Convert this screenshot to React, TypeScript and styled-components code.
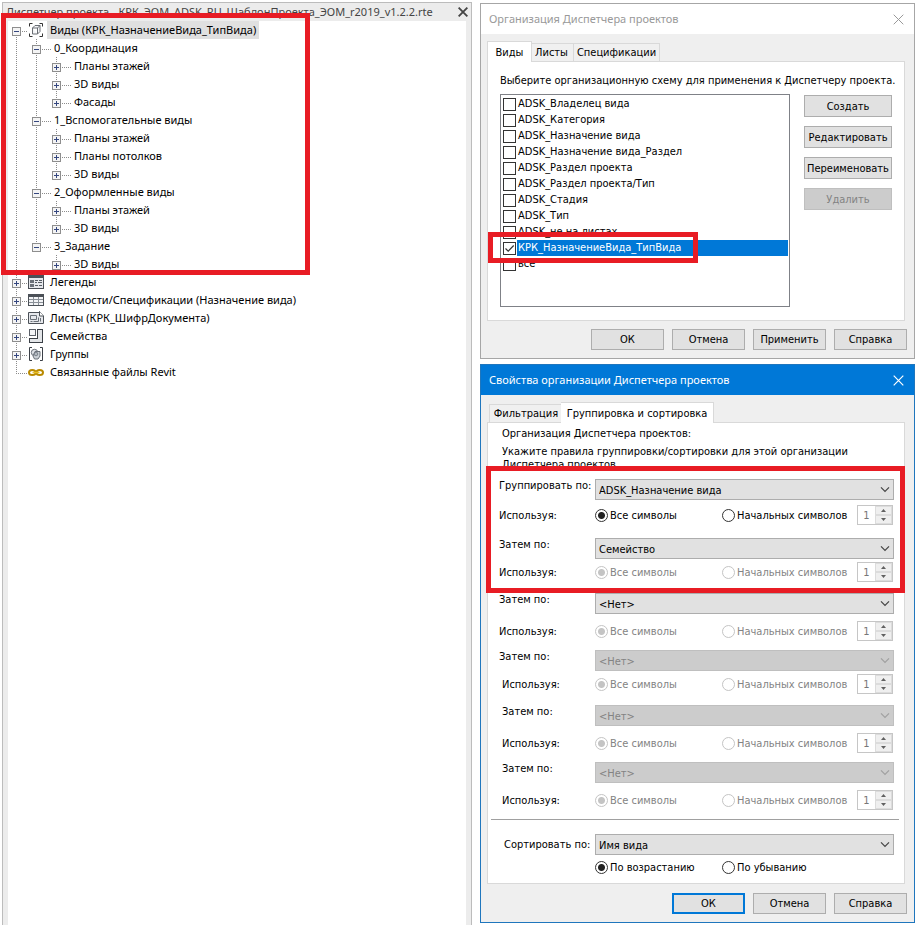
import React, { useState } from 'react';
import styled, { createGlobalStyle, css } from 'styled-components';

const treeFont = '"Noto Sans", "Open Sans", sans-serif';
const dialogFont = '"DejaVu Sans Condensed", "DejaVu Sans", sans-serif';
const RED = '#e81c24';
const BLUE = '#0078d7';

const GlobalStyle = createGlobalStyle`
  *, *::before, *::after { box-sizing: border-box; }
  body { margin: 0; background: #fff; color: #000; }
  button, input, select { font: inherit; color: inherit; margin: 0; padding: 0; border-radius: 0; }
  ul { list-style: none; margin: 0; padding: 0; }
  p, h2 { margin: 0; font-weight: 400; }
`;

const Page = styled.div`
  display: grid;
  grid-template-columns: minmax(0, 470fr) minmax(0, 435fr);
  column-gap: 8px;
  min-height: 100vh;
  padding: 0 4px 0 2px;
`;

/* ---------- shared ---------- */

const Highlight = styled.div`
  position: absolute;
  border: 5px solid ${RED};
  pointer-events: none;
  z-index: 2;
`;

const IconButton = styled.button`
  display: flex;
  align-items: center;
  justify-content: center;
  border: 0;
  background: none;
`;

const CloseIcon = ({ size, width }: { size: number; width: number }) => (
  <svg width={size} height={size} viewBox="0 0 11 11" aria-hidden="true">
    <path d="M.7.7l9.6 9.6M10.3.7L.7 10.3" stroke="currentColor" strokeWidth={width} fill="none" />
  </svg>
);

/* ---------- project browser ---------- */

const Browser = styled.section`
  position: relative;
  display: flex;
  flex-direction: column;
  margin-top: 2px;
  border: 1px solid #bcbcbc;
  border-bottom: 0;
  background: #ececec;
  font: 11px/18px ${treeFont};
`;

const BrowserTitle = styled.header`
  display: flex;
  justify-content: space-between;
  align-items: center;
  height: 18px;
  padding: 0 3px;
  color: #444;
  white-space: nowrap;
`;

const Tree = styled.ul`
  flex: 1;
  margin: 0 5px;
  background: #fff;
`;

const TreeRow = styled.li`
  display: flex;
  height: 18px;
`;

const dotsX = 'repeating-linear-gradient(90deg, #8c8c8c 0 1px, transparent 1px 2px)';
const dotsY = 'repeating-linear-gradient(180deg, #8c8c8c 0 1px, transparent 1px 2px)';

type Line = 'none' | 'full' | 'top' | 'bottom';

const Guide = styled.span<{ $line: Line; $branch?: boolean }>`
  display: flex;
  align-items: center;
  flex: none;
  width: 20px;
  padding-left: 4px;
  background-repeat: no-repeat;
  background-image: ${p => (p.$branch ? dotsX : 'none')}, ${p => (p.$line === 'none' ? 'none' : dotsY)};
  background-size: 12px 1px, 1px ${p => (p.$line === 'full' ? '18px' : '10px')};
  background-position: 8px 10px, 8px ${p => (p.$line === 'bottom' ? '10px' : '0')};
`;

const Stub = styled.span`
  flex: none;
  width: 3px;
  background: ${dotsX} 0 10px / 3px 1px no-repeat;
`;

const Toggle = styled(IconButton)`
  width: 9px;
  height: 9px;
  margin-top: 2px;
`;

const TreeIcon = styled.span`
  display: flex;
  align-items: center;
  flex: none;
  width: 19px;
`;

const TreeLabel = styled.span<{ $selected?: boolean }>`
  padding: 0 3px;
  white-space: nowrap;
  background: ${p => (p.$selected ? '#e0e0e0' : 'transparent')};
`;

const BrowserHighlight = styled(Highlight)`
  left: -2px;
  top: 10px;
  width: 309px;
  height: 262px;
`;

const ToggleIcon = ({ open }: { open: boolean }) => (
  <svg width="9" height="9" viewBox="0 0 9 9" shapeRendering="crispEdges" aria-hidden="true">
    <rect x=".5" y=".5" width="8" height="8" fill="#f4f4f4" stroke="#8e8e8e" />
    <path d={open ? 'M2 4.500h5' : 'M2 4.500h5M4.500 2v5'} stroke="#35477f" />
  </svg>
);

const iconArt: Record<string, React.ReactNode> = {
  views: (
    <g fill="none" stroke="#333">
      <path d="M4.500 1.500h-3v3M11.500 1.500h3v3M1.500 11.500v3h3M14.500 11.500v3h-3" />
      <path d="M7 3.500L4.500 6v6h5L12 9.500v-6zM4.500 6h5v6M9.500 6L12 3.500" stroke="#6a6e74" fill="#f4f5f7" />
    </g>
  ),
  legends: (
    <g shapeRendering="crispEdges">
      <path d="M.5 1.500h15v13H.5z" fill="#e6e8ec" stroke="#4b5057" />
      <path d="M0 1h16v3H0z" fill="#4b5057" />
      <path d="M2 6h4v3H2zM2 10h4v3H2z" fill="#6a7078" />
      <path d="M7 6.500h3M11 6.500h3M7 8.500h2M10 8.500h4M7 11.500h3M11 11.500h3" stroke="#555b63" />
    </g>
  ),
  schedules: (
    <g shapeRendering="crispEdges">
      <path d="M.5 2.500h15v11H.5z" fill="#f3f4f6" stroke="#4b5057" />
      <path d="M0 2h16v3H0z" fill="#4b5057" />
      <path d="M1 7.500h14M1 10.500h14M5.500 5v8M10.500 5v8" stroke="#8a9098" />
    </g>
  ),
  sheets: (
    <g fill="#e6e8ec" stroke="#4b5057">
      <path d="M.5 2.500v11h15V6l-4-4.500v1z" />
      <path d="M11.500 1.500V6h4" fill="#fff" />
      <path d="M2.500 5.500h6v4h-6zM5.500 11.500h5V7.500M12.500 8v3.500M2.500 11.500h2" fill="none" stroke="#6a7078" />
    </g>
  ),
  families: (
    <g shapeRendering="crispEdges">
      <path d="M1.500 1.500h6v6h-6z" fill="#f3f4f6" stroke="#5b6068" />
      <path d="M9.500 1.500h5v13h-13v-4h8z" fill="#e3e5e8" stroke="#3b4047" />
    </g>
  ),
  groups: (
    <g fill="none" stroke="#3b4047">
      <path d="M4 1.500H1.500v13H4M12 1.500h2.500v13H12" />
      <circle cx="6.500" cy="6.500" r="3.200" fill="#dfe2e6" stroke="#6a7078" />
      <path d="M7 5.500h5v4.500l-2 3H6.500L5 10z" fill="#ccd1d6" stroke="#6a7078" />
      <circle cx="8" cy="8" r="1.800" fill="#b3b9c0" stroke="#7b828a" />
    </g>
  ),
  links: (
    <g fill="none" stroke="#b98a00" strokeWidth="2">
      <ellipse cx="4.300" cy="8.500" rx="3.300" ry="2.500" />
      <ellipse cx="11.700" cy="8.500" rx="3.300" ry="2.500" />
      <path d="M4.500 8.500h7" stroke="#e8c02a" strokeWidth="1.600" />
    </g>
  ),
};

type Node = { level: 0 | 1 | 2; label: string; icon?: string; open?: boolean; leaf?: boolean; selected?: boolean };

const nodes: Node[] = [
  { level: 0, label: 'Виды (КРК_НазначениеВида_ТипВида)', icon: 'views', open: true, selected: true },
  { level: 1, label: '0_Координация', open: true },
  { level: 2, label: 'Планы этажей' },
  { level: 2, label: '3D виды' },
  { level: 2, label: 'Фасады' },
  { level: 1, label: '1_Вспомогательные виды', open: true },
  { level: 2, label: 'Планы этажей' },
  { level: 2, label: 'Планы потолков' },
  { level: 2, label: '3D виды' },
  { level: 1, label: '2_Оформленные виды', open: true },
  { level: 2, label: 'Планы этажей' },
  { level: 2, label: '3D виды' },
  { level: 1, label: '3_Задание', open: true },
  { level: 2, label: '3D виды' },
  { level: 0, label: 'Легенды', icon: 'legends' },
  { level: 0, label: 'Ведомости/Спецификации (Назначение вида)', icon: 'schedules' },
  { level: 0, label: 'Листы (КРК_ШифрДокумента)', icon: 'sheets' },
  { level: 0, label: 'Семейства', icon: 'families' },
  { level: 0, label: 'Группы', icon: 'groups' },
  { level: 0, label: 'Связанные файлы Revit', icon: 'links', leaf: true },
];

/* A guide continues below a row while a later sibling exists before its parent level ends. */
const continues = (index: number, level: number) => {
  const next = nodes.slice(index + 1).find(n => n.level <= level);
  return next !== undefined && next.level === level;
};

const guideLine = (index: number, level: number): Line => {
  const below = continues(index, level);
  if (nodes[index].level > level) return below ? 'full' : 'none';
  if (index === 0) return 'bottom';
  return below ? 'full' : 'top';
};

const ProjectBrowser = () => (
  <Browser>
    <BrowserTitle>
      <span>Диспетчер проекта - КРК_ЭОМ_ADSK_RU_ШаблонПроекта_ЭОМ_r2019_v1.2.2.rte</span>
      <IconButton aria-label="Закрыть">
        <CloseIcon size={10} width={2} />
      </IconButton>
    </BrowserTitle>
    <Tree role="tree">
      {nodes.map((node, i) => (
        <TreeRow key={i} role="treeitem" aria-level={node.level + 1} aria-selected={!!node.selected}>
          {Array.from({ length: node.level + 1 }, (_, level) => (
            <Guide key={level} $line={guideLine(i, level)} $branch={level === node.level}>
              {level === node.level && !node.leaf && (
                <Toggle aria-label={node.open ? 'Свернуть' : 'Развернуть'}>
                  <ToggleIcon open={!!node.open} />
                </Toggle>
              )}
            </Guide>
          ))}
          {node.icon ? (
            <TreeIcon>
              <svg width="16" height="16" viewBox="0 0 16 16" aria-hidden="true">
                {iconArt[node.icon]}
              </svg>
            </TreeIcon>
          ) : (
            <Stub />
          )}
          <TreeLabel $selected={node.selected}>{node.label}</TreeLabel>
        </TreeRow>
      ))}
    </Tree>
    <BrowserHighlight />
  </Browser>
);

/* ---------- dialogs ---------- */

const Dialogs = styled.div`
  display: flex;
  flex-direction: column;
  gap: 5px;
  padding: 3px 0 2px;
`;

const Dialog = styled.section<{ $active?: boolean }>`
  position: relative;
  border: 1px solid ${p => (p.$active ? '#1f76bd' : '#a6a6a6')};
  background: #efefef;
  font: 11px/15px ${dialogFont};
`;

const DialogTitle = styled.header<{ $active?: boolean }>`
  display: flex;
  align-items: center;
  justify-content: space-between;
  height: 30px;
  padding: 0 10px 0 8px;
  background: ${p => (p.$active ? BLUE : '#fff')};
  color: ${p => (p.$active ? '#fff' : '#999')};
`;

const TitleText = styled.h2`
  font: 11px/16px ${treeFont};
`;

const Tabs = styled.div`
  display: flex;
  align-items: flex-end;
  height: 27px;
  padding-left: 8px;
`;

const Tab = styled.button<{ $width: number; $active?: boolean }>`
  width: ${p => p.$width}px;
  height: 18px;
  border: 1px solid #d9d9d9;
  border-bottom: 0;
  background: #f0f0f0;
  white-space: nowrap;
  ${p =>
    p.$active
      ? css`
          position: relative;
          z-index: 1;
          height: 21px;
          margin: 0 -2px -1px;
          background: #fff;
        `
      : css`
          & + & {
            border-left: 0;
          }
        `}
`;

const TabPanel = styled.div<{ $rules?: boolean }>`
  margin: 0 9px 0 6px;
  padding: ${p => (p.$rules ? '4px 10px 6px 11px' : '11px 12px 13px 12px')};
  border: 1px solid #d9d9d9;
  background: #fff;
`;

const Footer = styled.footer<{ $gap: number }>`
  display: flex;
  justify-content: flex-end;
  gap: 8px;
  padding: ${p => p.$gap}px 7px 8px;
`;

const Button = styled.button<{ $wide?: boolean; $primary?: boolean }>`
  width: ${p => (p.$wide ? 88 : 73)}px;
  height: ${p => (p.$wide ? 22 : 21)}px;
  border: ${p => (p.$primary ? `2px solid ${BLUE}` : '1px solid #adadad')};
  background: #e1e1e1;
  white-space: nowrap;
  &:disabled {
    background: #ccc;
    border-color: #bfbfbf;
    color: #838383;
  }
`;

const SchemePrompt = styled.p`
  white-space: nowrap;
`;

const SchemeArea = styled.div`
  display: flex;
  gap: 14px;
  margin-top: 6px;
`;

const SchemeList = styled.ul`
  flex: 1;
  height: 213px;
  padding: 1px 1px 0 2px;
  border: 1px solid #7f8187;
`;

const SchemeItem = styled.li`
  position: relative;
  height: 16px;
`;

const SchemeLabel = styled.label<{ $selected?: boolean }>`
  display: flex;
  align-items: center;
  gap: 1px;
  height: 16px;
  line-height: 16px;
  white-space: nowrap;
  span {
    flex: 1;
    padding-left: 1px;
    ${p => p.$selected && `background: ${BLUE}; color: #fff;`}
  }
`;

const CheckBox = styled.input`
  appearance: none;
  flex: none;
  width: 13px;
  height: 13px;
  border: 1px solid #333;
  background: #fff;
  &:checked {
    background: #fff
      url("data:image/svg+xml,%3Csvg xmlns='http://www.w3.org/2000/svg' viewBox='0 0 11 11'%3E%3Cpath d='M1.500 5.500l2.700 2.700L9.700 2.500' fill='none' stroke='%23333' stroke-width='1.200'/%3E%3C/svg%3E")
      center / 11px no-repeat;
  }
`;

const SchemeHighlight = styled(Highlight)`
  left: -15px;
  top: -8px;
  width: 210px;
  height: 31px;
`;

const ButtonStack = styled.div`
  display: flex;
  flex-direction: column;
  gap: 9px;
  padding-top: 1px;
`;

const schemes = [
  'ADSK_Владелец вида',
  'ADSK_Категория',
  'ADSK_Назначение вида',
  'ADSK_Назначение вида_Раздел',
  'ADSK_Раздел проекта',
  'ADSK_Раздел проекта/Тип',
  'ADSK_Стадия',
  'ADSK_Тип',
  'ADSK_не на листах',
  'КРК_НазначениеВида_ТипВида',
  'все',
];

const OrganizationDialog = () => {
  const [current, setCurrent] = useState('КРК_НазначениеВида_ТипВида');
  return (
    <Dialog>
      <DialogTitle>
        <TitleText>Организация Диспетчера проектов</TitleText>
        <IconButton aria-label="Закрыть">
          <CloseIcon size={11} width={1} />
        </IconButton>
      </DialogTitle>
      <Tabs role="tablist">
        <Tab role="tab" aria-selected $width={45} $active>Виды</Tab>
        <Tab role="tab" $width={44}>Листы</Tab>
        <Tab role="tab" $width={86}>Спецификации</Tab>
      </Tabs>
      <TabPanel>
        <SchemePrompt>Выберите организационную схему для применения к Диспетчеру проекта.</SchemePrompt>
        <SchemeArea>
          <SchemeList>
            {schemes.map(name => (
              <SchemeItem key={name}>
                <SchemeLabel $selected={name === current}>
                  <CheckBox type="checkbox" checked={name === current} onChange={() => setCurrent(name)} />
                  <span>{name}</span>
                </SchemeLabel>
                {name.startsWith('КРК') && <SchemeHighlight />}
              </SchemeItem>
            ))}
          </SchemeList>
          <ButtonStack>
            <Button $wide>Создать</Button>
            <Button $wide>Редактировать</Button>
            <Button $wide>Переименовать</Button>
            <Button $wide disabled>Удалить</Button>
          </ButtonStack>
        </SchemeArea>
      </TabPanel>
      <Footer $gap={8}>
        <Button>ОК</Button>
        <Button>Отмена</Button>
        <Button>Применить</Button>
        <Button>Справка</Button>
      </Footer>
    </Dialog>
  );
};

const Intro = styled.div`
  padding-left: 3px;
  line-height: 13px;
`;

const IntroHeading = styled.p`
  margin-bottom: 4px;
  line-height: 14px;
`;

const Rules = styled.div`
  padding-top: 8px;
`;

const Rule = styled.fieldset<{ $after: number }>`
  margin: 0 0 ${p => p.$after}px;
  padding: 0;
  border: 0;
  min-width: 0;
`;

const FieldRow = styled.div`
  display: grid;
  grid-template-columns: 96px minmax(0, 1fr);
`;

const OptionRow = styled.div<{ $gap: number }>`
  display: grid;
  grid-template-columns: 96px 127px minmax(0, 1fr) auto;
  align-items: center;
  height: ${p => p.$gap + 20}px;
  padding: ${p => p.$gap}px 1px 0 0;
`;

const FieldLabel = styled.label<{ $indent?: boolean }>`
  padding-left: ${p => (p.$indent ? 3 : 0)}px;
  line-height: 13px;
  white-space: nowrap;
`;

const SortLabel = styled.label`
  align-self: center;
  padding-left: 5px;
  white-space: nowrap;
`;

const SelectBox = styled.div`
  position: relative;
  svg {
    position: absolute;
    right: 4px;
    top: 7px;
    pointer-events: none;
  }
`;

const Select = styled.select`
  appearance: none;
  display: block;
  width: 100%;
  height: 21px;
  padding: 1px 20px 0 3px;
  border: 1px solid #adadad;
  background: #e1e1e1;
  &:disabled {
    background: #ccc;
    border-color: #bfbfbf;
    color: #838383;
    opacity: 1;
  }
`;

const Option = styled.label<{ $disabled?: boolean }>`
  display: flex;
  align-items: center;
  gap: 2px;
  white-space: nowrap;
  color: ${p => (p.$disabled ? '#838383' : '#000')};
`;

const Radio = styled.input`
  appearance: none;
  flex: none;
  width: 13px;
  height: 13px;
  border: 1px solid #333;
  border-radius: 50%;
  background: #fff;
  &:checked {
    background: radial-gradient(circle, #222 0 3px, #fff 4px);
  }
  &:disabled {
    border-color: #c4c4c4;
  }
  &:disabled:checked {
    background: radial-gradient(circle, #c4c4c4 0 3px, #fff 4px);
  }
`;

const Spinner = styled.div`
  display: grid;
  grid-template: 9px 9px / 17px 17px;
  width: 36px;
  height: 20px;
  border: 1px solid #c6c6c6;
  background: #fff;
  color: #777;
`;

const SpinInput = styled.input`
  grid-row: 1 / 3;
  appearance: textfield;
  width: 17px;
  border: 0;
  background: none;
  text-align: center;
  &::-webkit-inner-spin-button {
    display: none;
  }
`;

const SpinButton = styled(IconButton)`
  background: #efefef;
  border: 1px solid #dcdcdc;
`;

const Divider = styled.hr`
  height: 1px;
  margin: 0 -5px 14px -8px;
  border: 0;
  background: #a0a0a0;
`;

const SortOptions = styled.div`
  display: grid;
  grid-template-columns: 127px minmax(0, 1fr);
  align-items: center;
  height: 22px;
  padding-top: 2px;
  margin-left: 96px;
`;

const RulesHighlight = styled(Highlight)`
  left: 5px;
  right: 9px;
  top: 101px;
  height: 127px;
`;

const Chevron = ({ faded }: { faded?: boolean }) => (
  <svg width="10" height="7" viewBox="0 0 10 7" aria-hidden="true">
    <path d="M1 1.300l4 4 4-4" fill="none" stroke={faded ? '#a0a0a0' : '#444'} strokeWidth="1.200" />
  </svg>
);

const Arrow = ({ up }: { up?: boolean }) => (
  <svg width="5" height="3" viewBox="0 0 5 3" aria-hidden="true">
    <path d={up ? 'M0 3L2.500 0 5 3z' : 'M0 0l2.500 3L5 0z'} fill="#606060" />
  </svg>
);

const Combo = ({ id, value, disabled }: { id: string; value: string; disabled?: boolean }) => (
  <SelectBox>
    <Select id={id} defaultValue={value} disabled={disabled}>
      <option>{value}</option>
    </Select>
    <Chevron faded={disabled} />
  </SelectBox>
);

const rules = [
  { label: 'Группировать по:', value: 'ADSK_Назначение вида', usable: true, gap: 5, after: 13 },
  { label: 'Затем по:', value: 'Семейство', gap: 3, after: 11 },
  { label: 'Затем по:', value: '<Нет>', gap: 7, after: 9 },
  { label: 'Затем по:', value: '<Нет>', off: true, indentUse: true, gap: 3, after: 11 },
  { label: 'Затем по:', value: '<Нет>', off: true, indentUse: true, indent: true, gap: 7, after: 9 },
  { label: 'Затем по:', value: '<Нет>', off: true, indentUse: true, indent: true, gap: 7, after: 9 },
];

const PropertiesDialog = () => (
  <Dialog $active>
    <DialogTitle $active>
      <TitleText>Свойства организации Диспетчера проектов</TitleText>
      <IconButton aria-label="Закрыть">
        <CloseIcon size={11} width={1.2} />
      </IconButton>
    </DialogTitle>
    <Tabs role="tablist">
      <Tab role="tab" $width={74}>Фильтрация</Tab>
      <Tab role="tab" aria-selected $width={153} $active>Группировка и сортировка</Tab>
    </Tabs>
    <TabPanel $rules>
      <Intro>
        <IntroHeading>Организация Диспетчера проектов:</IntroHeading>
        <p>Укажите правила группировки/сортировки для этой организации Диспетчера проектов.</p>
      </Intro>
      <Rules>
        {rules.map((rule, i) => (
          <Rule key={i} $after={rule.after}>
            <FieldRow>
              <FieldLabel htmlFor={`rule-${i}`} $indent={rule.indent}>{rule.label}</FieldLabel>
              <Combo id={`rule-${i}`} value={rule.value} disabled={rule.off} />
            </FieldRow>
            <OptionRow $gap={rule.gap}>
              <FieldLabel as="span" $indent={rule.indentUse}>Используя:</FieldLabel>
              <Option $disabled={!rule.usable}>
                <Radio type="radio" name={`use-${i}`} defaultChecked disabled={!rule.usable} />
                Все символы
              </Option>
              <Option $disabled={!rule.usable}>
                <Radio type="radio" name={`use-${i}`} disabled={!rule.usable} />
                Начальных символов
              </Option>
              <Spinner>
                <SpinInput type="number" defaultValue={1} disabled aria-label="Число символов" />
                <SpinButton disabled aria-label="Больше"><Arrow up /></SpinButton>
                <SpinButton disabled aria-label="Меньше"><Arrow /></SpinButton>
              </Spinner>
            </OptionRow>
          </Rule>
        ))}
      </Rules>
      <Divider />
      <FieldRow>
        <SortLabel htmlFor="sort">Сортировать по:</SortLabel>
        <Combo id="sort" value="Имя вида" />
      </FieldRow>
      <SortOptions>
        <Option>
          <Radio type="radio" name="order" defaultChecked />
          По возрастанию
        </Option>
        <Option>
          <Radio type="radio" name="order" />
          По убыванию
        </Option>
      </SortOptions>
    </TabPanel>
    <Footer $gap={9}>
      <Button $primary>ОК</Button>
      <Button>Отмена</Button>
      <Button>Справка</Button>
    </Footer>
    <RulesHighlight />
  </Dialog>
);

export default function App() {
  return (
    <>
      <GlobalStyle />
      <Page>
        <ProjectBrowser />
        <Dialogs>
          <OrganizationDialog />
          <PropertiesDialog />
        </Dialogs>
      </Page>
    </>
  );
}
